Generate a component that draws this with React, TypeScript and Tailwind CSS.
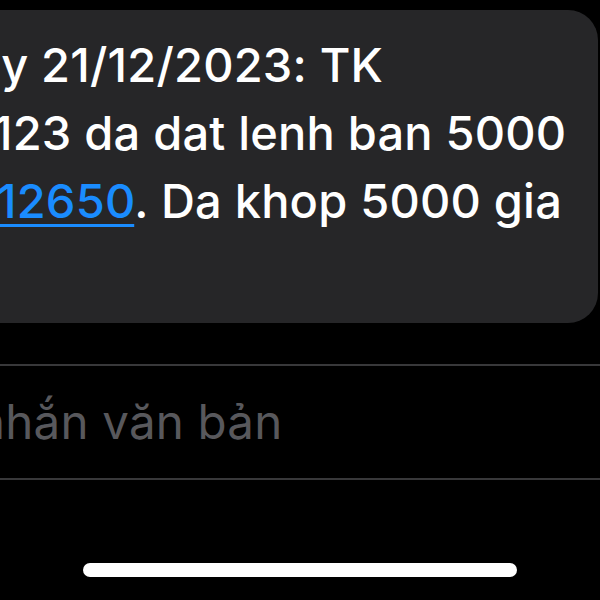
export default function App() {
  const lines = [
    { text: <>ay 21/12/2023: TK</>, offset: 'ml-[-25px]' },
    { text: <>123 da dat lenh ban 5000</>, offset: 'ml-[-7px]' },
    {
      text: (
        <>
          <span className="text-[#1a8cff] underline decoration-[3px] underline-offset-[6px]">12650</span>. Da khop 5000 gia
        </>
      ),
      offset: 'ml-[-3px]',
    },
  ];

  return (
    <div
      className="w-[600px] h-[600px] bg-black overflow-hidden flex flex-col"
      style={{ fontFamily: 'Inter, "Noto Sans", sans-serif' }}
    >
      {/* message bubble, cut off on the left */}
      <div className="mt-[10px] w-[598px] h-[313px] shrink-0 bg-[#262628] rounded-r-[30px] overflow-hidden pt-[21px]">
        {lines.map((line, i) => (
          <div
            key={i}
            className={`${line.offset} whitespace-nowrap text-white text-[47px] leading-[68px] font-medium tracking-[0.2px]`}
          >
            {line.text}
          </div>
        ))}
      </div>

      {/* input field */}
      <div className="mt-[41px] h-[2px] bg-[#38383a] shrink-0" />
      <div className="h-[112px] shrink-0 flex items-center overflow-hidden">
        <span className="ml-[-23px] whitespace-nowrap text-[47.5px] tracking-[0.2px] text-[#58585c]">nhắn văn bản</span>
      </div>
      <div className="h-[2px] bg-[#38383a] shrink-0" />

      {/* home indicator */}
      <div className="mt-[83px] mx-auto w-[434px] h-[14px] rounded-full bg-white shrink-0" />
    </div>
  );
}
